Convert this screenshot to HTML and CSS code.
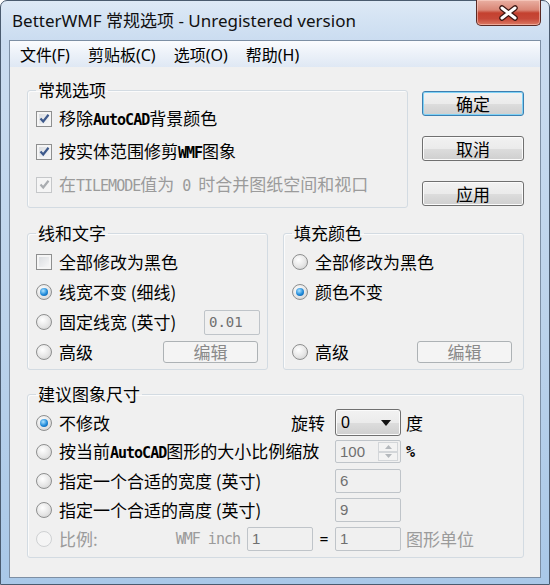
FILE: index.html
```html
<!DOCTYPE html>
<html lang="zh-CN">
<head>
  <meta charset="UTF-8">
  <title>BetterWMF 常规选项</title>
  <link rel="stylesheet" href="styles.css">
</head>
<body>
  <div class="window">
    <div class="titlebar">
      <span class="title">BetterWMF 常规选项 - Unregistered version</span>
      <span class="close">
        <svg width="63" height="24" viewBox="0 0 63 24">
          <path d="M25 7 L38 17 M38 7 L25 17" stroke="#3b1612" stroke-width="5.5" stroke-linecap="round" fill="none"/>
          <path d="M25 7 L38 17 M38 7 L25 17" stroke="#ffffff" stroke-width="3" stroke-linecap="round" fill="none"/>
        </svg>
      </span>
    </div>

    <div class="client">
      <ul class="menubar">
        <li>文件(F)</li>
        <li>剪贴板(C)</li>
        <li>选项(O)</li>
        <li>帮助(H)</li>
      </ul>

      <div class="content">
        <div class="top-row">
          <fieldset class="group general">
            <legend>常规选项</legend>
            <div class="row">
              <span class="check"><svg width="13" height="13" viewBox="0 0 13 13"><path d="M2.5 6.5 L5.2 9.5 L10.5 2.8" stroke="#3e5a8c" stroke-width="2.2" fill="none"/></svg></span>
              <span>移除<span class="mono">AutoCAD</span>背景颜色</span>
            </div>
            <div class="row">
              <span class="check"><svg width="13" height="13" viewBox="0 0 13 13"><path d="M2.5 6.5 L5.2 9.5 L10.5 2.8" stroke="#3e5a8c" stroke-width="2.2" fill="none"/></svg></span>
              <span>按实体范围修剪<span class="mono">WMF</span>图象</span>
            </div>
            <div class="row disabled">
              <span class="check off"><svg width="13" height="13" viewBox="0 0 13 13"><path d="M2.5 6.5 L5.2 9.5 L10.5 2.8" stroke="#a9acb0" stroke-width="2.2" fill="none"/></svg></span>
              <span>在<span class="mono">TILEMODE</span>值为<span class="mono"> 0 </span>时合并图纸空间和视口</span>
            </div>
          </fieldset>

          <div class="actions">
            <button class="btn default">确定</button>
            <button class="btn">取消</button>
            <button class="btn">应用</button>
          </div>
        </div>

        <div class="mid-row">
          <fieldset class="group mid">
            <legend>线和文字</legend>
            <div class="row">
              <span class="check"></span>
              <span>全部修改为黑色</span>
            </div>
            <div class="row">
              <span class="radio on"></span>
              <span>线宽不变 (细线)</span>
            </div>
            <div class="row">
              <span class="radio"></span>
              <span>固定线宽 (英寸)</span>
              <span class="field small">0.01</span>
            </div>
            <div class="row">
              <span class="radio"></span>
              <span>高级</span>
              <button class="btn-off">编辑</button>
            </div>
          </fieldset>

          <fieldset class="group mid fill">
            <legend>填充颜色</legend>
            <div class="row">
              <span class="radio"></span>
              <span>全部修改为黑色</span>
            </div>
            <div class="row">
              <span class="radio on"></span>
              <span>颜色不变</span>
            </div>
            <div class="row"></div>
            <div class="row">
              <span class="radio"></span>
              <span>高级</span>
              <button class="btn-off">编辑</button>
            </div>
          </fieldset>
        </div>

        <fieldset class="group size">
          <legend>建议图象尺寸</legend>
          <div class="size-row">
            <div class="cell">
              <span class="radio on"></span>
              <span>不修改</span>
              <span class="side-label">旋转</span>
            </div>
            <div class="combo">
              <span>0</span>
              <svg width="10" height="6" viewBox="0 0 10 6"><path d="M0 0 H10 L5 6 Z" fill="#111"/></svg>
            </div>
            <span class="unit">度</span>
          </div>
          <div class="size-row">
            <div class="cell">
              <span class="radio"></span>
              <span>按当前<span class="mono">AutoCAD</span>图形的大小比例缩放</span>
            </div>
            <div class="field spin">
              <span>100</span>
              <span class="spin-btns">
                <span><svg width="7" height="4" viewBox="0 0 7 4"><path d="M0 4 L3.5 0 L7 4 Z" fill="#b4b8bc"/></svg></span>
                <span><svg width="7" height="4" viewBox="0 0 7 4"><path d="M0 0 H7 L3.5 4 Z" fill="#b4b8bc"/></svg></span>
              </span>
            </div>
            <span class="unit mono">%</span>
          </div>
          <div class="size-row">
            <div class="cell">
              <span class="radio"></span>
              <span>指定一个合适的宽度 (英寸)</span>
            </div>
            <span class="field">6</span>
            <span></span>
          </div>
          <div class="size-row">
            <div class="cell">
              <span class="radio"></span>
              <span>指定一个合适的高度 (英寸)</span>
            </div>
            <span class="field">9</span>
            <span></span>
          </div>
          <div class="size-row disabled">
            <div class="cell">
              <span class="radio off"></span>
              <span>比例:</span>
              <span class="ratio">
                <span class="mono">WMF inch</span>
                <span class="field">1</span>
                <span class="equals">=</span>
              </span>
            </div>
            <span class="field">1</span>
            <span class="unit">图形单位</span>
          </div>
        </fieldset>
      </div>
    </div>
  </div>
</body>
</html>
```

FILE: styles.css
```css
* {
  box-sizing: border-box;
}

body {
  margin: 0;
  font-family: "Noto Sans CJK SC", "Noto Sans", sans-serif;
  font-size: 17px;
  color: #000;
  background: #fff;
}

.window {
  width: 550px;
  height: 585px;
  border: 1px solid #4a5b6f;
  border-radius: 7px 7px 0 0;
  background: linear-gradient(to bottom, #dde9f6 0, #cadcf0 40px, #bcd3eb 55%, #a9c8e8 100%);
  padding: 0 8px 6px;
  display: flex;
  flex-direction: column;
}

.titlebar {
  height: 39px;
  display: flex;
  justify-content: space-between;
  align-items: flex-start;
}

.title {
  padding: 9px 0 0 3px;
  font-family: "Noto Sans", "Noto Sans CJK SC", sans-serif;
  font-size: 17px;
  line-height: 22px;
  color: #111;
}

.close {
  width: 65px;
  height: 26px;
  margin-top: -1px;
  border: 1px solid #5a2a24;
  border-top: none;
  border-radius: 0 0 5px 5px;
  background: linear-gradient(to bottom, #eab0a3 0, #d98676 40%, #c4412f 52%, #c64838 75%, #dc7a63 100%);
  box-shadow: inset 0 0 0 1px rgba(255, 220, 210, 0.5);
  display: flex;
  align-items: center;
  justify-content: center;
}

.client {
  flex: 1;
  border: 1px solid #7d8fa4;
  background: #f0f0f0;
  display: flex;
  flex-direction: column;
}

.menubar {
  margin: 0;
  padding: 3px 0 0 1px;
  height: 26px;
  list-style: none;
  display: flex;
  background: linear-gradient(to bottom, #fbfcfe 0, #edf2f9 45%, #dfe8f4 100%);
  font-family: "Noto Sans", "Noto Sans CJK SC", sans-serif;
  font-size: 16px;
  line-height: 23px;
}

.menubar li {
  padding: 0 9px;
}

.content {
  padding: 14px 16px 0 17px;
}

.top-row {
  display: flex;
}

.mid-row {
  display: flex;
  gap: 15px;
  margin-top: 16px;
}

.group {
  margin: 0;
  padding: 3px 8px 6px;
  border: 1px solid #d3dbe2;
  border-radius: 3px;
  box-shadow: inset 1px 1px 0 #fbfbfb;
  min-width: 0;
}

.group legend {
  padding: 0 2px;
  font-size: 17px;
  line-height: 18px;
}

.general {
  width: 381px;
}

.mid {
  width: 241px;
  padding: 5px 8px 2px;
}

.size {
  margin-top: 15px;
  padding: 5px 8px 4px;
}

.row {
  display: flex;
  align-items: center;
  gap: 7px;
  height: 30px;
  line-height: 20px;
}

.general .row {
  height: 33px;
}

.mono {
  font-family: "DejaVu Sans Mono", monospace;
  font-size: 15px;
  font-weight: bold;
  letter-spacing: -1px;
}

.disabled {
  color: #9b9b9b;
}

.disabled .mono {
  font-weight: normal;
}

.check {
  width: 16px;
  height: 16px;
  flex: none;
  border: 1px solid #8e8f8f;
  background: linear-gradient(135deg, #d6d9dd, #fbfbfb);
  box-shadow: inset 0 0 0 2px #f5f5f5;
  display: flex;
  align-items: center;
  justify-content: center;
}

.check.off {
  border-color: #c5c7c9;
  background: #f4f4f4;
}

.radio {
  width: 16px;
  height: 16px;
  flex: none;
  border-radius: 50%;
  border: 1px solid #8e8f8f;
  background: radial-gradient(circle at 40% 35%, #ffffff, #e6e6e6 55%, #c9c9c9);
  display: flex;
  align-items: center;
  justify-content: center;
}

.radio.on::after {
  content: "";
  width: 8px;
  height: 8px;
  border-radius: 50%;
  background: radial-gradient(circle at 40% 35%, #aee3ff, #1f8ad9 55%, #0a4f9a);
}

.radio.off {
  border-color: #cfd1d3;
  background: #f5f5f5;
}

.actions {
  width: 102px;
  margin-left: 14px;
  padding-top: 10px;
  display: flex;
  flex-direction: column;
  gap: 20px;
}

.btn {
  height: 25px;
  padding: 0;
  border: 1px solid #707070;
  border-radius: 3px;
  background: linear-gradient(to bottom, #f2f2f2 0, #ebebeb 50%, #dddddd 51%, #cfcfcf 100%);
  box-shadow: inset 0 0 0 1px #fbfbfb;
  font-family: inherit;
  font-size: 17px;
  line-height: 22px;
  color: #000;
}

.btn.default {
  border-color: #3c7fb1;
  box-shadow: inset 0 0 0 1px #7fd2f6;
}

.btn-off {
  width: 95px;
  height: 22px;
  margin-left: auto;
  margin-right: 1px;
  padding: 0;
  border: 1px solid #adb2b5;
  border-radius: 3px;
  background: #f4f4f4;
  font-family: inherit;
  font-size: 17px;
  line-height: 18px;
  color: #8a8a8a;
}

.fill .btn-off {
  margin-right: 3px;
}

.field {
  height: 24px;
  border: 1px solid #bfc4c9;
  border-radius: 2px;
  background: #f0f0f0;
  padding: 0 4px;
  font-family: "Liberation Sans", sans-serif;
  font-size: 15px;
  line-height: 22px;
  color: #6f6f6f;
  display: flex;
  align-items: center;
}

.field.small {
  width: 56px;
  margin-left: auto;
  margin-right: -1px;
  height: 25px;
  font-family: "DejaVu Sans Mono", monospace;
  font-size: 14px;
}

.size-row {
  display: grid;
  grid-template-columns: 299px 66px 1fr;
  align-items: center;
  height: 29px;
  line-height: 20px;
}

.cell {
  display: flex;
  align-items: center;
  gap: 7px;
}

.side-label {
  margin-left: auto;
  margin-right: 10px;
}

.unit {
  padding-left: 5px;
}

.combo {
  height: 27px;
  border: 1px solid #707070;
  border-radius: 3px;
  background: linear-gradient(to bottom, #f2f2f2 0, #ebebeb 50%, #dddddd 51%, #cfcfcf 100%);
  box-shadow: inset 0 0 0 1px #fbfbfb;
  display: flex;
  align-items: center;
  justify-content: space-between;
  padding: 0 9px 0 5px;
  font-family: "Liberation Sans", sans-serif;
  font-size: 16px;
}

.spin {
  height: 23px;
  padding-right: 2px;
  justify-content: space-between;
}

.spin-btns {
  width: 20px;
  height: 19px;
  display: flex;
  flex-direction: column;
}

.spin-btns span {
  flex: 1;
  border: 1px solid #d3d6d9;
  background: #f3f3f3;
  display: flex;
  align-items: center;
  justify-content: center;
}

.ratio {
  margin-left: auto;
  display: flex;
  align-items: center;
}

.ratio .field {
  width: 66px;
  margin-left: 7px;
}

.equals {
  width: 22px;
  text-align: center;
  color: #000;
  font-family: "DejaVu Sans Mono", monospace;
  font-size: 14px;
}
```
